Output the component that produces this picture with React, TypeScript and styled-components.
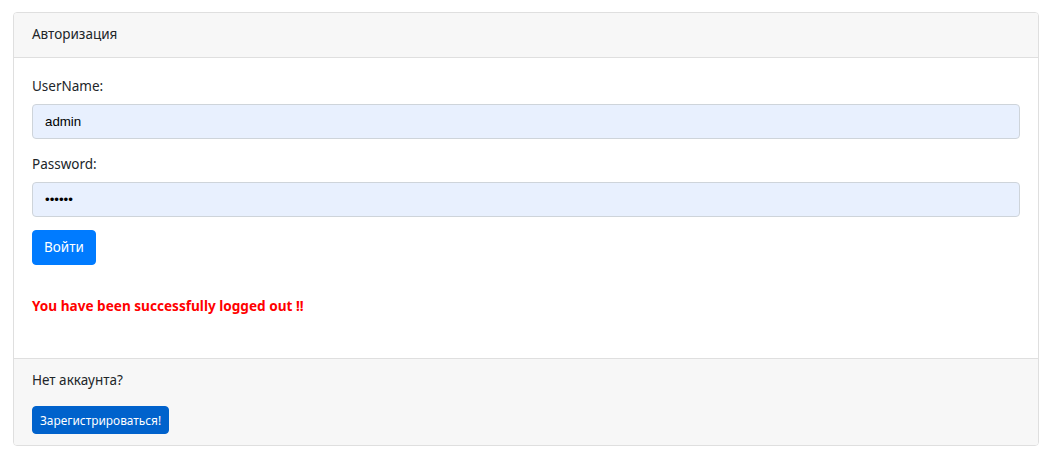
import React from "react";
import styled, { createGlobalStyle } from "styled-components";

const Global = createGlobalStyle`
  html, body { margin: 0; padding: 0; background: #fff; }
  body {
    font-family: "Noto Sans", "Open Sans", sans-serif;
    font-size: 13.5px;
    line-height: 21px;
    color: #212529;
  }
  * { box-sizing: border-box; }
`;

const Page = styled.div`
  padding: 12px 15px 0 13px;
`;

const Card = styled.div`
  display: flex;
  flex-direction: column;
  border: 1px solid #dfdfdf;
  border-radius: 4px;
  overflow: hidden;
`;

const CardHeader = styled.div`
  background: #f7f7f7;
  border-bottom: 1px solid #dfdfdf;
  padding: 11px 18px 12px;
  line-height: 21px;
`;

const CardBody = styled.form`
  padding: 18px 18px 0;
  height: 300px;
  display: flex;
  flex-direction: column;
`;

const Group = styled.div<{ $mb?: number }>`
  display: flex;
  flex-direction: column;
  margin-bottom: ${(p) => p.$mb ?? 15}px;
`;

const Label = styled.label`
  line-height: 21px;
  margin-bottom: 7px;
`;

const Input = styled.input`
  height: 35px;
  width: 100%;
  border: 1px solid #ced4da;
  border-radius: 4px;
  background: #e8f0fe;
  padding: 0 12px;
  font-family: "Liberation Sans", Arial, sans-serif;
  font-size: 13.3px;
  color: #000;
  outline: none;
`;

const Button = styled.button<{ $small?: boolean }>`
  align-self: flex-start;
  border: 1px solid ${(p) => (p.$small ? "#0062cc" : "#007bff")};
  background: ${(p) => (p.$small ? "#0062cc" : "#007bff")};
  color: #fff;
  font-family: "Noto Sans", "Open Sans", sans-serif;
  font-size: ${(p) => (p.$small ? "11.9px" : "13.5px")};
  line-height: ${(p) => (p.$small ? "18px" : "21px")};
  height: ${(p) => (p.$small ? "28px" : "35px")};
  padding: ${(p) => (p.$small ? "0 7px" : "0 11px")};
  border-radius: 4px;
  cursor: pointer;
`;

const Message = styled.div`
  margin-top: 31px;
  color: #ff0000;
  font-weight: 700;
  font-size: 13.6px;
  line-height: 19px;
`;

const CardFooter = styled.div`
  background: #f7f7f7;
  border-top: 1px solid #dfdfdf;
  padding: 11px 18px 11px;
  display: flex;
  flex-direction: column;
  gap: 15px;
`;

export default function App() {
  return (
    <>
      <Global />
      <Page>
        <Card>
          <CardHeader>Авторизация</CardHeader>
          <CardBody onSubmit={(e) => e.preventDefault()}>
            <Group>
              <Label>UserName:</Label>
              <Input type="text" defaultValue="admin" />
            </Group>
            <Group $mb={13}>
              <Label>Password:</Label>
              <Input type="password" defaultValue="123456" />
            </Group>
            <Button type="submit">Войти</Button>
            <Message>You have been successfully logged out !!</Message>
          </CardBody>
          <CardFooter>
            <span>Нет аккаунта?</span>
            <Button $small type="button">Зарегистрироваться!</Button>
          </CardFooter>
        </Card>
      </Page>
    </>
  );
}
